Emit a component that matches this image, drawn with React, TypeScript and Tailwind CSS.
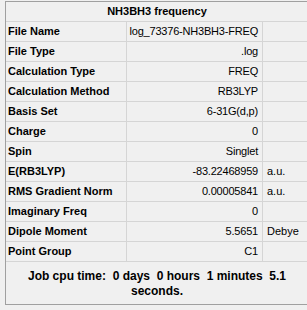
const rows: [string, string, string][] = [
  ["File Name", "log_73376-NH3BH3-FREQ", ""],
  ["File Type", ".log", ""],
  ["Calculation Type", "FREQ", ""],
  ["Calculation Method", "RB3LYP", ""],
  ["Basis Set", "6-31G(d,p)", ""],
  ["Charge", "0", ""],
  ["Spin", "Singlet", ""],
  ["E(RB3LYP)", "-83.22468959", "a.u."],
  ["RMS Gradient Norm", "0.00005841", "a.u."],
  ["Imaginary Freq", "0", ""],
  ["Dipole Moment", "5.5651", "Debye"],
  ["Point Group", "C1", ""],
];

export default function App() {
  return (
    <div className="w-[307px] h-[310px] overflow-hidden bg-[#f0f0f0] pt-px font-['Liberation_Sans',Arial,sans-serif] text-[11px] leading-none text-black">
      <div className="ml-[5px] w-[303px] border-l border-t border-b border-[#a0a0a0]">
        <div className="h-[20px] flex items-center justify-center font-bold border-b border-[#d5d5d5]">
          NH3BH3 frequency
        </div>
        {rows.map(([label, value, unit]) => (
          <div key={label} className="h-[20px] flex border-b border-[#d5d5d5]">
            <div className="w-[121px] flex items-center pl-[2px] font-bold whitespace-nowrap border-r border-[#d5d5d5]">
              {label}
            </div>
            <div className="w-[136px] flex items-center justify-end pr-[4px] whitespace-nowrap tracking-[-0.2px] border-r border-[#d5d5d5]">
              {value}
            </div>
            <div className="flex-1 flex items-center pl-[4px] whitespace-nowrap">{unit}</div>
          </div>
        ))}
        <div className="h-[42px] flex items-center justify-center pt-[2px]">
          <p className="w-[270px] text-center text-[12px] font-bold whitespace-pre-wrap leading-[15px]">
            {"Job cpu time:  0 days  0 hours  1 minutes  5.1 seconds."}
          </p>
        </div>
      </div>
    </div>
  );
}
